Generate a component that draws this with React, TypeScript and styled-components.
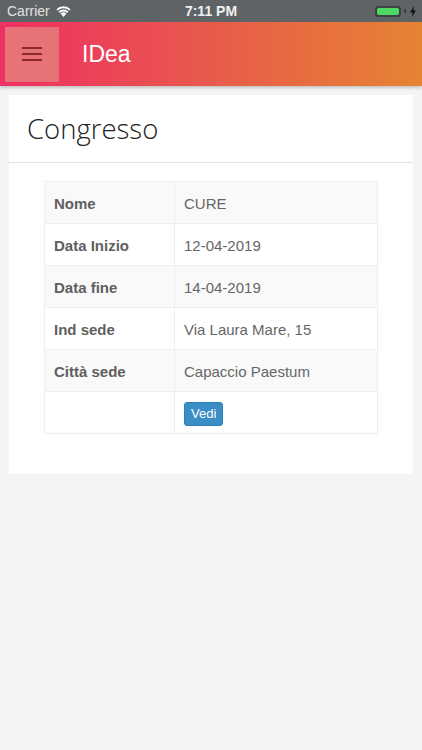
import React from "react";
import styled, { createGlobalStyle } from "styled-components";

const GlobalStyle = createGlobalStyle`
  html, body {
    margin: 0;
    padding: 0;
    background: #f4f4f4;
    font-family: "Liberation Sans", Arial, sans-serif;
  }
  * { box-sizing: border-box; }
`;

const Page = styled.div`
  width: 422px;
  min-height: 750px;
  background: #f4f4f4;
`;

const StatusBar = styled.div`
  height: 22px;
  background: #5e6466;
  display: flex;
  align-items: center;
  justify-content: space-between;
  padding: 0 6px 0 7px;
  font-size: 14px;
  position: relative;
`;

const Carrier = styled.div`
  display: flex;
  align-items: center;
  gap: 5px;
  color: #e2e2e2;
`;

const Clock = styled.div`
  position: absolute;
  left: 0;
  right: 0;
  text-align: center;
  font-weight: bold;
  font-size: 14px;
  color: #f0f0f0;
  pointer-events: none;
`;

const Battery = styled.div`
  display: flex;
  align-items: center;
  gap: 3px;
`;

const BatteryBody = styled.div`
  width: 26px;
  height: 11px;
  border: 1px solid #3c4142;
  border-radius: 3px;
  padding: 1px;
  background: #3c4142;
  div {
    width: 100%;
    height: 100%;
    background: #4cd964;
    border-radius: 2px;
  }
`;

const Header = styled.header`
  height: 64px;
  background: linear-gradient(90deg, #ef2f62 0%, #e85a4c 50%, #e68432 100%);
  display: flex;
  align-items: center;
  padding: 0 5px;
  box-shadow: 0 2px 3px rgba(0, 0, 0, 0.2);
`;

const MenuButton = styled.button`
  width: 54px;
  height: 55px;
  border: none;
  background: #e77278;
  display: flex;
  align-items: center;
  justify-content: center;
  padding: 0;
`;

const Title = styled.h1`
  margin: 0 0 0 23px;
  color: #fff;
  font-weight: normal;
  font-size: 23px;
  font-family: "Liberation Sans", Arial, sans-serif;
`;

const Card = styled.section`
  margin: 9px 9px 0;
  background: #fff;
  padding-bottom: 40px;
`;

const CardHeader = styled.div`
  height: 68px;
  display: flex;
  align-items: center;
  padding: 0 18px;
  border-bottom: 1px solid #e2e2e2;
`;

const CardTitle = styled.h2`
  margin: 0;
  font-family: "Open Sans", "Liberation Sans", sans-serif;
  font-weight: 300;
  font-size: 27.5px;
  color: #222;
`;

const TableWrap = styled.div`
  padding: 18px 35px 0;
`;

const Table = styled.table`
  width: 100%;
  border-collapse: collapse;
  font-size: 15px;
  color: #666;
`;

const Row = styled.tr<{ $striped: boolean }>`
  height: 42px;
  background: ${(p) => (p.$striped ? "#f9f9f9" : "#fff")};
`;

const Label = styled.th`
  width: 130px;
  text-align: left;
  font-weight: bold;
  color: #5f5f5f;
  padding: 2px 9px 0;
  border: 1px solid #eeeeee;
`;

const Value = styled.td`
  padding: 2px 9px 0;
  border: 1px solid #eeeeee;
`;

const Button = styled.button`
  background: #3a8ec5;
  color: #fff;
  border: 1px solid #2f7fb3;
  border-radius: 3px;
  font-family: "Liberation Sans", Arial, sans-serif;
  font-size: 13px;
  height: 24px;
  padding: 0 6px;
`;

const rows = [
  ["Nome", "CURE"],
  ["Data Inizio", "12-04-2019"],
  ["Data fine", "14-04-2019"],
  ["Ind sede", "Via Laura Mare, 15"],
  ["Città sede", "Capaccio Paestum"],
];

export default function App() {
  return (
    <Page>
      <GlobalStyle />
      <StatusBar>
        <Carrier>
          Carrier
          <svg width="17" height="12" viewBox="0 0 17 12">
            <path d="M8.5 12 L5.6 8.6 A4.2 4.2 0 0 1 11.4 8.6 Z" fill="#fff" />
            <path d="M3.6 6.6 A7 7 0 0 1 13.4 6.6 L12.1 8 A5.2 5.2 0 0 0 4.9 8 Z" fill="#fff" />
            <path d="M1.4 4.2 A10.2 10.2 0 0 1 15.6 4.2 L14.3 5.6 A8.3 8.3 0 0 0 2.7 5.6 Z" fill="#fff" />
          </svg>
        </Carrier>
        <Clock>7:11 PM</Clock>
        <Battery>
          <BatteryBody>
            <div />
          </BatteryBody>
          <svg width="3" height="5" viewBox="0 0 3 5">
            <rect width="2" height="4" fill="#3c4142" />
          </svg>
          <svg width="6" height="11" viewBox="0 0 6 11">
            <path d="M4 0 L0 6.5 H2.6 L1.8 11 L6 4.5 H3.4 Z" fill="#111" />
          </svg>
        </Battery>
      </StatusBar>
      <Header>
        <MenuButton aria-label="menu">
          <svg width="20" height="14" viewBox="0 0 20 14">
            <rect y="0" width="20" height="2" fill="#8b2b31" />
            <rect y="6" width="20" height="2" fill="#8b2b31" />
            <rect y="12" width="20" height="2" fill="#8b2b31" />
          </svg>
        </MenuButton>
        <Title>IDea</Title>
      </Header>
      <Card>
        <CardHeader>
          <CardTitle>Congresso</CardTitle>
        </CardHeader>
        <TableWrap>
          <Table>
            <tbody>
              {rows.map(([k, v], i) => (
                <Row key={k} $striped={i % 2 === 0}>
                  <Label>{k}</Label>
                  <Value>{v}</Value>
                </Row>
              ))}
              <Row $striped={false}>
                <Label />
                <Value>
                  <Button>Vedi</Button>
                </Value>
              </Row>
            </tbody>
          </Table>
        </TableWrap>
      </Card>
    </Page>
  );
}
